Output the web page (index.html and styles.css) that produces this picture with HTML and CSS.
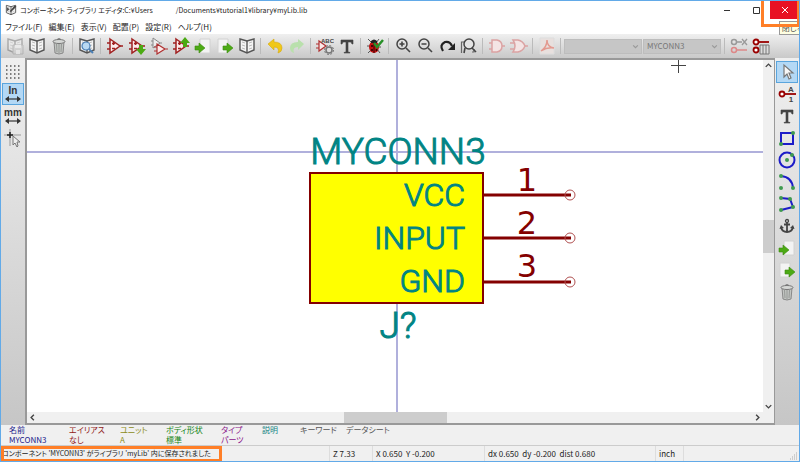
FILE: index.html
```html
<!DOCTYPE html>
<html lang="ja">
<head>
    <meta charset="UTF-8">
    <meta name="viewport" content="width=device-width, initial-scale=1.0">
    <title>コンポーネント ライブラリ エディタ</title>
    <link rel="stylesheet" href="styles.css">
</head>
<body>
    <!-- Shared icons -->
    <svg class="icon-defs" aria-hidden="true">
        <symbol id="book" viewBox="0 0 18 18">
            <path d="M9 4L2 2v11l7 3 7-3V2z" fill="#f4f4f4" stroke="#555" stroke-width="1.4"/>
            <path d="M9 4v12" stroke="#555" stroke-width="1.4"/>
            <path d="M4 5l3 1M4 8l3 1M4 11l3 1M14 5l-3 1M14 8l-3 1M14 11l-3 1" stroke="#bbb"/>
        </symbol>
        <symbol id="trash" viewBox="0 0 18 18">
            <path d="M4 5l1 11q4 2 8 0l1-11z" fill="#c2c5c2" stroke="#888"/>
            <path d="M6.500 7l.5 8M9 7v9M11.500 7l-.5 8" stroke="#959895"/>
            <ellipse cx="9" cy="4.500" rx="6" ry="2" fill="#d6d8d6" stroke="#777"/>
            <path d="M7 2.500q2-2 4 0" fill="none" stroke="#777"/>
        </symbol>
        <symbol id="opamp" viewBox="0 0 18 18">
            <path d="M4 2l10 7-10 7z" fill="#fbeaea" stroke="#a02020" stroke-width="1.5"/>
            <path d="M1 6h3M1 12h3M14 9h3M6 6.500h3M7.500 5v3M6 11.500h3" stroke="#a02020" stroke-width="1.300"/>
        </symbol>
        <symbol id="page-in" viewBox="0 0 18 18">
            <path d="M6 2h10v14H6z" fill="#f3f3f3" stroke="#d2d2d2"/>
            <path d="M1 9h4V6l6 5-6 5v-3H1z" fill="#4caa14" stroke="#3c8c10" stroke-width=".6"/>
        </symbol>
        <symbol id="page-out" viewBox="0 0 18 18">
            <path d="M2 2h10v14H2z" fill="#f3f3f3" stroke="#d2d2d2"/>
            <path d="M7 9h4V6l6 5-6 5v-3H7z" fill="#4caa14" stroke="#3c8c10" stroke-width=".6"/>
        </symbol>
        <symbol id="cursor" viewBox="0 0 18 18">
            <path d="M6 2v12l3-3 2 5 2-1-2-5h4z" fill="#f8f8f8" stroke="#777" stroke-width="1.200"/>
        </symbol>
        <symbol id="text-tool" viewBox="0 0 18 18">
            <path d="M3 3h12v4h-1L13 5h-3v10l2 .5V16H6v-.5l2-.5V5H5L4 7H3z" fill="#444" stroke="#444" stroke-width=".6"/>
        </symbol>
        <symbol id="gate" viewBox="0 0 18 18">
            <path d="M4 3h5q5 1 5 6t-5 6H4z" fill="#f4e4e4" stroke="#dba3a3" stroke-width="1.500"/>
            <path d="M1 6h3M1 12h3M14 9h3" stroke="#dba3a3" stroke-width="1.500"/>
        </symbol>
    </svg>

    <div class="window">
        <header class="title-bar">
            <svg class="app-icon" viewBox="0 0 18 18"><use href="#book"/><path d="M7 11l8-9 2 2-8 8z" fill="#444"/><path d="M3 5l4 3-4 3z" fill="#555"/></svg>
            <h1 class="title">コンポーネント ライブラリ エディタ:C:¥Users</h1>
            <span class="title-path">/Documents¥tutorial1¥library¥myLib.lib</span>
            <div class="window-controls">
                <button class="window-btn" aria-label="最小化"><svg viewBox="0 0 10 10"><path d="M2 5.500h6" stroke="#333"/></svg></button>
                <button class="window-btn" aria-label="最大化"><svg viewBox="0 0 10 10"><path d="M2.500 2.500h6v6h-6z" fill="none" stroke="#333"/></svg></button>
                <button class="window-btn close" aria-label="閉じる"><svg viewBox="0 0 10 10"><path d="M2 2l6 6M8 2L2 8" stroke="#fff"/></svg></button>
            </div>
        </header>

        <nav class="menu-bar">
            <button class="menu">ファイル(F)</button>
            <button class="menu">編集(E)</button>
            <button class="menu">表示(V)</button>
            <button class="menu">配置(P)</button>
            <button class="menu">設定(R)</button>
            <button class="menu">ヘルプ(H)</button>
        </nav>

        <div class="toolbar" role="toolbar">
            <button class="tool disabled" aria-label="保存"><svg viewBox="0 0 18 18"><use href="#book"/><path d="M7 8h10v9H7z" fill="#ccc" stroke="#888"/><path d="M9 8h6v3H9zM10 13h4v4h-4z" fill="#fff"/></svg></button>
            <button class="tool" aria-label="ライブラリ選択"><svg viewBox="0 0 18 18"><use href="#book"/></svg></button>
            <button class="tool" aria-label="削除"><svg viewBox="0 0 18 18"><use href="#trash"/></svg></button>
            <span class="separator"></span>
            <button class="tool" aria-label="ライブラリブラウザ"><svg viewBox="0 0 18 18"><use href="#book"/><circle cx="8" cy="9" r="4" fill="#b9d9f2" stroke="#4a7fb5" stroke-width="1.200"/><path d="M11 12l4 4" stroke="#4a7fb5" stroke-width="2"/></svg></button>
            <span class="separator"></span>
            <button class="tool" aria-label="新規コンポーネント"><svg viewBox="0 0 18 18"><use href="#opamp"/></svg></button>
            <button class="tool" aria-label="読み込み"><svg viewBox="0 0 18 18"><use href="#opamp"/><path d="M11 8h4v4h3l-5 6-5-6h3z" fill="#4caa14"/></svg></button>
            <button class="tool" aria-label="コピー"><svg viewBox="0 0 18 18"><path d="M3 1l7 5-7 5zM1 4h2M1 8h2M10 6h2" fill="#eee" stroke="#888"/><path d="M7 7l8 5-8 5zM4 10h3M4 14h3M15 12h3" fill="#fbeaea" stroke="#b03030" stroke-width="1.200"/></svg></button>
            <button class="tool" aria-label="更新"><svg viewBox="0 0 18 18"><use href="#opamp"/><path d="M11 10h4V6h3l-5-6-5 6h3z" fill="#4caa14"/></svg></button>
            <button class="tool" aria-label="インポート"><svg viewBox="0 0 18 18"><use href="#page-in"/></svg></button>
            <button class="tool" aria-label="エクスポート"><svg viewBox="0 0 18 18"><use href="#page-out"/></svg></button>
            <button class="tool" aria-label="新規ライブラリ"><svg viewBox="0 0 18 18"><use href="#book"/></svg></button>
            <span class="separator"></span>
            <button class="tool" aria-label="元に戻す"><svg viewBox="0 0 18 18"><path d="M2 7l6-5v3q8 0 8 6 0 4-4 5 2-6-4-6v3z" fill="#f0c818" stroke="#d5a810" stroke-width=".6"/></svg></button>
            <button class="tool" aria-label="やり直し"><svg viewBox="0 0 18 18"><path d="M16 7l-6-5v3q-8 0-8 6 0 4 4 5-2-6 4-6v3z" fill="#b9e0ac"/></svg></button>
            <span class="separator"></span>
            <button class="tool" aria-label="プロパティ"><svg viewBox="0 0 18 18"><path d="M3 4l7 5-7 5zM0 7h3M0 11h3" fill="#fbeaea" stroke="#b03030" stroke-width="1.200"/><text x="5" y="6" class="icon-abc">ABC</text><circle cx="13" cy="13" r="3" fill="#ddd" stroke="#777" stroke-width="1.500"/><circle cx="13" cy="13" r="4.500" fill="none" stroke="#777" stroke-dasharray="2 1.500"/></svg></button>
            <button class="tool" aria-label="フィールド"><svg viewBox="0 0 18 18"><use href="#text-tool"/></svg></button>
            <span class="separator"></span>
            <button class="tool" aria-label="チェック"><svg viewBox="0 0 18 18"><path d="M2 2l4 4M13 2l-3 4M1 9h4M2 16l4-4M14 16l-3-4M15 10h-3" stroke="#555"/><ellipse cx="8" cy="10" rx="5" ry="6" fill="#c01010"/><path d="M5 4q3-3 6 0v2H5z" fill="#222"/><path d="M8 6v10" stroke="#300"/><circle cx="6" cy="9" r="1" fill="#200"/><circle cx="6" cy="13" r="1" fill="#200"/><circle cx="10.500" cy="13" r="1" fill="#200"/><path d="M8 6l3 4 6-7" fill="none" stroke="#289028" stroke-width="2.500"/></svg></button>
            <span class="separator"></span>
            <button class="tool" aria-label="拡大"><svg viewBox="0 0 18 18"><circle cx="8" cy="7" r="5" fill="none" stroke="#444" stroke-width="1.500"/><path d="M12 11l4 4M5.500 7h5M8 4.500v5" stroke="#444" stroke-width="1.600"/></svg></button>
            <button class="tool" aria-label="縮小"><svg viewBox="0 0 18 18"><circle cx="8" cy="7" r="5" fill="none" stroke="#444" stroke-width="1.500"/><path d="M12 11l4 4M5.500 7h5" stroke="#444" stroke-width="1.600"/></svg></button>
            <button class="tool" aria-label="再描画"><svg viewBox="0 0 18 18"><path d="M5 14Q1 8 7 5q5-1 7 4" fill="none" stroke="#222" stroke-width="2.200"/><path d="M17 6v7h-7z" fill="#222"/></svg></button>
            <button class="tool" aria-label="全体表示"><svg viewBox="0 0 18 18"><path d="M1.500 16V5h4M12 15h2V12" fill="none" stroke="#666" stroke-width="1.200"/><circle cx="9" cy="7" r="5" fill="#e4e4e4" stroke="#444" stroke-width="1.500"/><path d="M12 11l4 4M5 11l-1 5" stroke="#444" stroke-width="1.600"/></svg></button>
            <span class="separator"></span>
            <button class="tool" aria-label="標準形状" disabled><svg viewBox="0 0 18 18"><use href="#gate"/></svg></button>
            <button class="tool" aria-label="ド・モルガン形状" disabled><svg viewBox="0 0 18 18"><path d="M3 3h5q5 1 7 6-2 5-7 6H3q4-6 0-12z" fill="#f4e4e4" stroke="#dba3a3" stroke-width="1.500"/><path d="M0 6h4M0 12h4M15 9h3" stroke="#dba3a3" stroke-width="1.500"/></svg></button>
            <span class="separator"></span>
            <button class="tool" aria-label="データシート" disabled><svg viewBox="0 0 18 18"><path d="M2 1h14v16H2z" fill="#e8e0de" stroke="#ddd"/><path d="M3 14q6-4 6-11 0 7 7 8-7-1-13 3" fill="none" stroke="#e39a90" stroke-width="1.500"/></svg></button>
            <span class="separator"></span>
            <select class="combo" aria-label="ユニット" disabled><option></option></select>
            <select class="combo" aria-label="エイリアス" disabled><option>MYCONN3</option></select>
            <span class="separator"></span>
            <button class="tool" aria-label="ピン個別編集"><svg viewBox="0 0 18 18"><circle cx="4" cy="5" r="2.500" fill="none" stroke="#999" stroke-width="1.500"/><path d="M7 5h5M12 2l5 6M17 2l-5 6" stroke="#999" stroke-width="1.300"/><circle cx="4" cy="13" r="2.500" fill="none" stroke="#d88" stroke-width="1.500"/><path d="M7 13h10" stroke="#d88" stroke-width="1.500"/></svg></button>
            <button class="tool" aria-label="ピン一覧"><svg viewBox="0 0 18 18"><path d="M8 8h9v9H8zM11 8v9M14 8v9" fill="#ddd" stroke="#777"/><circle cx="4" cy="5" r="2.500" fill="#fff" stroke="#900" stroke-width="1.800"/><path d="M7 5h10" stroke="#900" stroke-width="1.800"/><circle cx="4" cy="13" r="2.500" fill="#fff" stroke="#900" stroke-width="1.800"/></svg></button>
        </div>

        <main class="workspace">
            <div class="side-tools">
                <button class="tool" aria-label="グリッド"><svg viewBox="0 0 18 18"><path d="M2 3h15M2 7h15M2 11h15M2 15h15" stroke="#555" stroke-width="1.500" stroke-dasharray="1.500 2.500"/></svg></button>
                <button class="tool active" aria-label="インチ"><svg viewBox="0 0 18 18"><text x="9" y="9" class="icon-unit">In</text><path d="M3 14h12" stroke="#333" stroke-width="1.200"/><path d="M1 14l4-3v6zM17 14l-4-3v6z" fill="#333"/></svg></button>
                <button class="tool" aria-label="ミリメートル"><svg viewBox="0 0 18 18"><text x="9" y="9" class="icon-unit">mm</text><path d="M3 14h12" stroke="#333" stroke-width="1.200"/><path d="M1 14l4-3v6zM17 14l-4-3v6z" fill="#333"/></svg></button>
                <button class="tool" aria-label="カーソル形状"><svg viewBox="0 0 18 18"><path d="M0 6h17M6 0v17" stroke="#999"/><path d="M3 6h6M6 3v6" stroke="#222" stroke-width="1.500"/><path d="M9 7v9l2-2 2 4 1-1-1-4h3z" fill="#eee" stroke="#777"/></svg></button>
            </div>

            <div class="canvas-frame">
                <div class="canvas">
                    <svg class="drawing" viewBox="27 60 736 352" preserveAspectRatio="xMidYMid slice">
                        <path class="axis" d="M-1000 152H2000M397 -1000V2000"/>
                        <rect class="component-body" x="310" y="173" width="173" height="130"/>
                        <g class="component-text">
                            <text class="field" x="398" y="164">MYCONN3</text>
                            <text class="field" x="398" y="338">J?</text>
                            <text class="pin-name" x="465" y="206">VCC</text>
                            <text class="pin-name" x="465" y="249">INPUT</text>
                            <text class="pin-name" x="465" y="292">GND</text>
                        </g>
                        <g class="pins">
                            <path d="M484 195h87M484 238h87M484 282h87"/>
                            <circle cx="570" cy="195" r="5"/>
                            <circle cx="570" cy="238" r="5"/>
                            <circle cx="570" cy="282" r="5"/>
                            <text x="527" y="191">1</text>
                            <text x="527" y="234">2</text>
                            <text x="527" y="277">3</text>
                        </g>
                        <path class="crosshair" d="M671 65.500h15M678.500 58v15"/>
                    </svg>
                </div>
                <div class="scrollbar vertical">
                    <svg viewBox="0 0 8 8"><path d="M2 5l2-2 2 2"/></svg>
                    <div class="track"><div class="thumb"></div></div>
                    <svg viewBox="0 0 8 8"><path d="M2 3l2 2 2-2"/></svg>
                </div>
                <div class="scrollbar horizontal">
                    <svg viewBox="0 0 8 8"><path d="M5 2L3 4l2 2"/></svg>
                    <div class="track"><div class="thumb"></div></div>
                    <svg viewBox="0 0 8 8"><path d="M3 2l2 2-2 2"/></svg>
                </div>
            </div>

            <div class="side-tools right">
                <button class="tool active" aria-label="選択"><svg viewBox="0 0 18 18"><use href="#cursor"/></svg></button>
                <button class="tool" aria-label="ピン"><svg viewBox="0 0 18 18"><circle cx="4" cy="9" r="2.500" fill="#fff" stroke="#900" stroke-width="1.800"/><path d="M7 9h11" stroke="#900" stroke-width="1.800"/><text x="13" y="7" class="icon-pin">A</text><text x="13" y="17" class="icon-pin">1</text></svg></button>
                <button class="tool" aria-label="テキスト"><svg viewBox="0 0 18 18"><use href="#text-tool"/></svg></button>
                <button class="tool" aria-label="矩形"><svg viewBox="0 0 18 18"><path d="M3 4h12v11H3z" class="shape"/><circle cx="15" cy="4" r="2" class="node"/><circle cx="3" cy="15" r="2" class="node"/></svg></button>
                <button class="tool" aria-label="円"><svg viewBox="0 0 18 18"><circle cx="9" cy="9" r="7.500" class="shape"/><circle cx="9" cy="9" r="2" class="node"/><circle cx="14" cy="4" r="2" class="node"/></svg></button>
                <button class="tool" aria-label="円弧"><svg viewBox="0 0 18 18"><path d="M3 3q11 1 12 12" class="shape"/><circle cx="3" cy="3" r="2" class="node"/><circle cx="3" cy="15" r="2" class="node"/><circle cx="15" cy="15" r="2" class="node"/></svg></button>
                <button class="tool" aria-label="ポリゴン"><svg viewBox="0 0 18 18"><path d="M3 3l9 1 3 8-12 3" class="shape"/><circle cx="3" cy="3" r="2" class="node"/><circle cx="12" cy="4" r="2" class="node"/><circle cx="15" cy="12" r="2" class="node"/><circle cx="3" cy="15" r="2" class="node"/></svg></button>
                <button class="tool" aria-label="アンカー"><svg viewBox="0 0 18 18"><circle cx="9" cy="4" r="1.500" fill="none" stroke="#444" stroke-width="1.300"/><path d="M9 5v10M6 7.500h6M3 10q1 5 6 5t6-5" fill="none" stroke="#444" stroke-width="1.800"/><path d="M1.500 12l1.500-4 3 3zM16.500 12L15 8l-3 3z" fill="#444"/></svg></button>
                <button class="tool" aria-label="インポート"><svg viewBox="0 0 18 18"><use href="#page-in"/></svg></button>
                <button class="tool" aria-label="エクスポート"><svg viewBox="0 0 18 18"><use href="#page-out"/></svg></button>
                <button class="tool" aria-label="削除"><svg viewBox="0 0 18 18"><use href="#trash"/></svg></button>
            </div>
        </main>

        <dl class="info-panel">
            <div class="info navy"><dt>名前</dt><dd>MYCONN3</dd></div>
            <div class="info red"><dt>エイリアス</dt><dd>なし</dd></div>
            <div class="info olive"><dt>ユニット</dt><dd>A</dd></div>
            <div class="info green"><dt>ボディ形状</dt><dd>標準</dd></div>
            <div class="info purple"><dt>タイプ</dt><dd>パーツ</dd></div>
            <div class="info teal"><dt>説明</dt><dd></dd></div>
            <div class="info gray"><dt>キーワード</dt><dd></dd></div>
            <div class="info gray"><dt>データシート</dt><dd></dd></div>
        </dl>

        <footer class="status-bar">
            <span class="status message">コンポーネント 'MYCONN3' がライブラリ 'myLib' 内に保存されました</span>
            <span class="status">Z 7.33</span>
            <span class="status">X 0.650&nbsp; Y -0.200</span>
            <span class="status">dx 0.650&nbsp; dy -0.200&nbsp; dist 0.680</span>
            <span class="status">inch</span>
            <span class="status"><svg class="grip" viewBox="0 0 8 8"><path d="M6 1h1M4 3h1M6 3h1M2 5h1M4 5h1M6 5h1M0 7h1M2 7h1M4 7h1M6 7h1" stroke="#aaa"/></svg></span>
        </footer>

        <div class="tooltip" role="tooltip">閉じる</div>
        <div class="highlight highlight-close"></div>
        <div class="highlight highlight-status"></div>
    </div>
</body>
</html>
```
FILE: styles.css
```css
* {
    margin: 0;
    padding: 0;
    box-sizing: border-box;
}

body {
    font-family: "Noto Sans CJK JP", sans-serif;
    font-size: 8px;
    line-height: 10px;
    font-feature-settings: "palt";
    color: #222;
}

button,
select {
    font: inherit;
    font-feature-settings: inherit;
    color: inherit;
    border: none;
    background: none;
}

.icon-defs {
    position: absolute;
    width: 0;
    height: 0;
}

.window {
    position: relative;
    display: flex;
    flex-direction: column;
    height: 100vh;
    overflow: hidden;
    background: #fff;
    border: 1px solid #62aae8;
}

/* Title bar and menus */
.title-bar {
    display: flex;
    align-items: center;
    height: 18px;
    padding-left: 4px;
    font-size: 7px;
}

.app-icon {
    width: 12px;
    height: 12px;
    margin-right: 3px;
}

.title {
    font-size: 7px;
    font-weight: normal;
}

.title-path {
    margin-left: 23px;
}

.window-controls {
    display: flex;
    align-self: stretch;
    margin-left: auto;
}

.window-btn {
    display: flex;
    align-items: center;
    justify-content: center;
    width: 29px;
}

.window-btn svg {
    width: 10px;
    height: 10px;
}

.window-btn.close {
    background: #e81123;
}

.menu-bar {
    display: flex;
    gap: 6px;
    height: 15px;
    padding-left: 4px;
}

/* Toolbars */
.toolbar {
    display: flex;
    align-items: center;
    height: 24px;
    padding-left: 3px;
    background: linear-gradient(#efefef, #c9c9c9);
}

.tool {
    display: flex;
    flex-shrink: 0;
    align-items: center;
    justify-content: center;
    width: 22px;
    height: 22px;
}

.tool svg {
    flex-shrink: 0;
    width: 18px;
    height: 18px;
}

.tool.disabled {
    opacity: 0.4;
}

.tool.active {
    background: #b3d8f5;
    border: 1px solid #5aa5dd;
}

.separator {
    width: 1px;
    height: 16px;
    margin: 0 3px 0 2px;
    background: #bbb;
}

.combo {
    width: 78px;
    height: 15px;
    margin-right: 1px;
    padding-left: 3px;
    appearance: none;
    color: #777;
    opacity: 1;
    background: #c6c6c6 url("data:image/svg+xml,%3Csvg xmlns='http://www.w3.org/2000/svg' viewBox='0 0 6 6'%3E%3Cpath d='M1 2l2 2 2-2' fill='none' stroke='%23999'/%3E%3C/svg%3E") no-repeat right 2px center / 7px 7px;
    border: 1px solid #bdbdbd;
}

.icon-abc {
    font: bold 6px "Liberation Sans", sans-serif;
    fill: #444;
}

.icon-unit {
    font: bold 10px "Liberation Sans", sans-serif;
    text-anchor: middle;
    fill: #333;
}

.icon-pin {
    font: bold 8px "Liberation Sans", sans-serif;
    text-anchor: middle;
    fill: #444;
}

.shape {
    fill: none;
    stroke: #1c1cc8;
    stroke-width: 2px;
}

.node {
    fill: #3f9a4f;
}

.workspace {
    display: flex;
    flex: 1;
    min-height: 0;
}

.side-tools {
    display: flex;
    flex-direction: column;
    align-items: center;
    width: 24px;
    padding-top: 3px;
    background: linear-gradient(#efefef, #c6c6c6);
}

/* Drawing area */
.canvas-frame {
    display: grid;
    grid-template: 1fr 11px / 1fr 11px;
    flex: 1;
    border: 2px solid #999;
    border-right-width: 1px;
    background: #f0f0f0;
}

.canvas {
    min-height: 0;
    background: #fff;
    overflow: hidden;
}

.drawing {
    display: block;
    width: 100%;
    height: 100%;
}

.axis {
    stroke: #b0b0dc;
    stroke-width: 2px;
}

.component-body {
    fill: #ff0;
    stroke: #840000;
    stroke-width: 2px;
}

.component-text {
    font-family: Roboto, sans-serif;
    font-weight: 300;
    fill: #008484;
    stroke: #008484;
    stroke-width: 1px;
}

.field {
    font-size: 37px;
    text-anchor: middle;
}

.pin-name {
    font-size: 32px;
    text-anchor: end;
}

.pins path {
    stroke: #840000;
    stroke-width: 3px;
}

.pins circle {
    fill: none;
    stroke: #b05050;
}

.pins text {
    font-family: "DejaVu Sans", sans-serif;
    font-size: 32px;
    text-anchor: middle;
    fill: #840000;
}

.crosshair {
    stroke: #444;
}

.scrollbar {
    display: flex;
    align-items: center;
    background: #f0f0f0;
}

.scrollbar.vertical {
    flex-direction: column;
}

.scrollbar svg {
    flex-shrink: 0;
    width: 11px;
    height: 11px;
}

.scrollbar path {
    fill: none;
    stroke: #444;
}

.track {
    display: flex;
    flex: 1;
    align-self: stretch;
}

.thumb {
    background: #cdcdcd;
}

.vertical .track {
    flex-direction: column;
    justify-content: center;
}

.vertical .thumb {
    height: 10%;
}

.horizontal .track {
    justify-content: center;
}

.horizontal .thumb {
    width: 103px;
}

/* Component info */
.info-panel {
    display: grid;
    grid-template-columns: 60px 51px 46px 55px 41px 38px 46px 1fr;
    height: 21px;
    padding-left: 8px;
    background: #f0f0f0;
    border-bottom: 1px solid #ccc;
}

.info {
    white-space: nowrap;
}

.navy {
    color: #22228c;
}

.red {
    color: #901818;
}

.olive {
    color: #8c8c20;
}

.green {
    color: #148414;
}

.purple {
    color: #8a148a;
}

.teal {
    color: #148484;
}

.gray {
    color: #555;
}

.status-bar {
    display: grid;
    grid-template-columns: 328px 43px 112px 171px 28px 1fr;
    height: 15px;
    line-height: 15px;
    background: #f0f0f0;
}

.status {
    padding-left: 3px;
    border-left: 1px solid #ddd;
    white-space: nowrap;
}

.status.message {
    padding-left: 1px;
    font-size: 7px;
    border-left: none;
}

.grip {
    display: block;
    width: 8px;
    height: 8px;
    margin: 6px 1px 0 auto;
}

/* Callouts laid over the window */
.tooltip {
    position: absolute;
    top: 20px;
    right: -8px;
    padding: 1px 2px;
    white-space: nowrap;
    color: #555;
    background: #ffffe1;
    border: 1px solid #999;
}

.highlight {
    position: absolute;
    border: 3px solid #ff7f27;
    pointer-events: none;
}

.highlight-close {
    top: -3px;
    right: -1px;
    width: 39px;
    height: 29px;
}

.highlight-status {
    bottom: -1px;
    left: 0;
    width: 221px;
    height: 16px;
}
```
